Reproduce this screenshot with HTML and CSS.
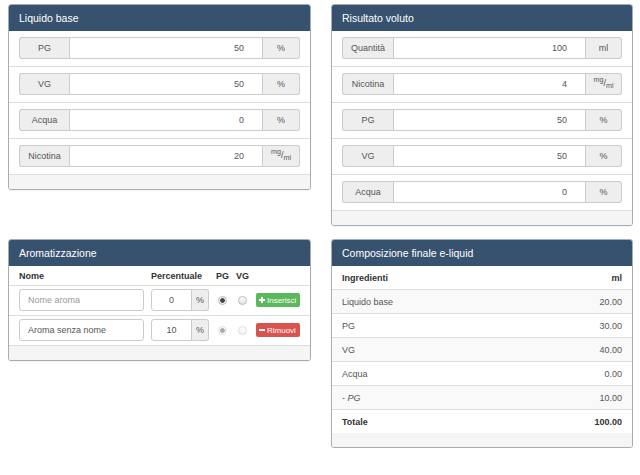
FILE: index.html
```html
<!DOCTYPE html>
<html lang="it">
<head>
  <meta charset="UTF-8">
  <meta name="viewport" content="width=device-width, initial-scale=1.0">
  <title>Calcolatore e-liquid</title>
  <link rel="stylesheet" href="styles.css">
</head>
<body>
  <div class="page">

    <div class="panel base">
      <div class="panel-heading">Liquido base</div>
      <div class="field">
        <div class="input-group">
          <span class="addon label">PG</span>
          <input type="text" id="basePg" value="50">
          <span class="addon unit">%</span>
        </div>
      </div>
      <div class="field">
        <div class="input-group">
          <span class="addon label">VG</span>
          <input type="text" id="baseVg" value="50">
          <span class="addon unit">%</span>
        </div>
      </div>
      <div class="field">
        <div class="input-group">
          <span class="addon label">Acqua</span>
          <input type="text" id="baseWater" value="0">
          <span class="addon unit">%</span>
        </div>
      </div>
      <div class="field">
        <div class="input-group">
          <span class="addon label">Nicotina</span>
          <input type="text" id="baseNic" value="20">
          <span class="addon unit"><span class="frac"><sup>mg</sup>/<sub>ml</sub></span></span>
        </div>
      </div>
      <div class="panel-footer"></div>
    </div>

    <div class="panel target">
      <div class="panel-heading">Risultato voluto</div>
      <div class="field">
        <div class="input-group">
          <span class="addon label">Quantità</span>
          <input type="text" id="amount" value="100">
          <span class="addon unit">ml</span>
        </div>
      </div>
      <div class="field">
        <div class="input-group">
          <span class="addon label">Nicotina</span>
          <input type="text" id="targetNic" value="4">
          <span class="addon unit"><span class="frac"><sup>mg</sup>/<sub>ml</sub></span></span>
        </div>
      </div>
      <div class="field">
        <div class="input-group">
          <span class="addon label">PG</span>
          <input type="text" id="targetPg" value="50">
          <span class="addon unit">%</span>
        </div>
      </div>
      <div class="field">
        <div class="input-group">
          <span class="addon label">VG</span>
          <input type="text" id="targetVg" value="50">
          <span class="addon unit">%</span>
        </div>
      </div>
      <div class="field">
        <div class="input-group">
          <span class="addon label">Acqua</span>
          <input type="text" id="targetWater" value="0">
          <span class="addon unit">%</span>
        </div>
      </div>
      <div class="panel-footer"></div>
    </div>

    <div class="panel">
      <div class="panel-heading">Aromatizzazione</div>
      <div class="aroma-row aroma-head">
        <span>Nome</span>
        <span>Percentuale</span>
        <span>PG</span>
        <span>VG</span>
        <span></span>
      </div>
      <div class="aroma-row">
        <input type="text" class="name" placeholder="Nome aroma">
        <div class="input-group">
          <input type="text" class="perc" value="0">
          <span class="addon pct">%</span>
        </div>
        <input type="radio" class="radio" name="base0" checked>
        <input type="radio" class="radio" name="base0">
        <button class="btn btn-add">
          <svg width="6" height="6" viewBox="0 0 6 6"><path d="M2 0h2v2h2v2H4v2H2V4H0V2h2z" fill="#fff"/></svg>
          Inserisci
        </button>
      </div>
      <div class="aroma-row">
        <input type="text" class="name" value="Aroma senza nome">
        <div class="input-group">
          <input type="text" class="perc" value="10">
          <span class="addon pct">%</span>
        </div>
        <input type="radio" class="radio" name="base1" checked disabled>
        <input type="radio" class="radio" name="base1" disabled>
        <button class="btn btn-remove">
          <svg width="6" height="6" viewBox="0 0 6 6"><rect y="2" width="6" height="2" fill="#fff"/></svg>
          Rimuovi
        </button>
      </div>
      <div class="panel-footer"></div>
    </div>

    <div class="panel">
      <div class="panel-heading">Composizione finale e-liquid</div>
      <table class="table">
        <thead>
          <tr><th>Ingredienti</th><th class="num">ml</th></tr>
        </thead>
        <tbody>
          <tr><td>Liquido base</td><td class="num">20.00</td></tr>
          <tr><td>PG</td><td class="num">30.00</td></tr>
          <tr><td>VG</td><td class="num">40.00</td></tr>
          <tr><td>Acqua</td><td class="num">0.00</td></tr>
          <tr><td>- <em>PG</em></td><td class="num">10.00</td></tr>
          <tr class="total"><td>Totale</td><td class="num">100.00</td></tr>
        </tbody>
      </table>
      <div class="panel-footer"></div>
    </div>

  </div>
</body>
</html>
```

FILE: styles.css
```css
body {
  margin: 0;
  font-family: "Liberation Sans", Arial, sans-serif;
  font-size: 9px;
  color: #333;
  background: #fff;
}
.page {
  display: grid;
  grid-template-columns: 303px 302px;
  column-gap: 20px;
  row-gap: 13px;
  padding: 4px 0 0 8px;
  align-items: start;
}
.panel {
  background: #fff;
  border: 1px solid #a3adb8;
  border-radius: 3px;
  overflow: hidden;
  box-shadow: 0 1px 1px rgba(0,0,0,0.05);
}
.panel-heading {
  height: 26px;
  line-height: 26px;
  padding: 0 10px;
  background: #36526f;
  color: #fff;
  font-size: 10.5px;
}
.panel-footer {
  height: 14px;
  background: #f5f5f5;
}

/* input groups */
.field {
  padding: 6px 10px 7px;
  border-bottom: 1px solid #ddd;
}
.input-group {
  display: flex;
  height: 22px;
}
.input-group input {
  flex: 1;
  min-width: 0;
  margin: 0;
  padding: 0 18px 0 6px;
  border: 1px solid #ccc;
  background: #fff;
  font: inherit;
  color: #555;
  text-align: right;
  box-sizing: border-box;
  outline: none;
}
.addon {
  display: flex;
  align-items: center;
  justify-content: center;
  background: #eee;
  border: 1px solid #ccc;
  color: #555;
  box-sizing: border-box;
}
.addon.label {
  width: 50px;
  border-right: 0;
  border-radius: 3px 0 0 3px;
}
.addon.unit {
  width: 37px;
  border-left: 0;
  border-radius: 0 3px 3px 0;
}
.target .addon.label {
  width: 51px;
}
.target .addon.unit {
  width: 36px;
}
.frac {
  display: block;
  line-height: 9px;
  margin-top: -1px;
}
.frac sup, .frac sub {
  position: relative;
  font-size: 7.2px;
  line-height: 0;
  vertical-align: baseline;
}
.frac sup {
  top: -4px;
}
.frac sub {
  top: 2px;
}

/* flavours */
.aroma-row {
  display: grid;
  grid-template-columns: 125px 58px 13px 13px auto;
  column-gap: 7px;
  align-items: center;
  padding: 3px 10px 4px;
  border-bottom: 1px solid #ddd;
}
.aroma-head {
  height: 19px;
  padding: 0 10px;
  font-weight: bold;
}
.aroma-row .name {
  height: 22px;
  margin: 0;
  padding: 0 8px;
  border: 1px solid #ccc;
  border-radius: 3px;
  font: inherit;
  color: #555;
  box-sizing: border-box;
  outline: none;
}
.name::placeholder {
  color: #999;
}
.aroma-row .perc {
  padding: 0 4px;
  text-align: center;
  border-radius: 3px 0 0 3px;
}
.addon.pct {
  width: 17px;
  border-left: 0;
  border-radius: 0 3px 3px 0;
}
.radio {
  appearance: none;
  justify-self: center;
  width: 9px;
  height: 9px;
  margin: 0;
  border: 1px solid #b8b8b8;
  border-radius: 50%;
  background: linear-gradient(#fff, #e2e2e2);
}
.radio:checked {
  background: radial-gradient(circle, #444 0 2px, #f2f2f2 2.6px);
}
.radio:disabled {
  opacity: 0.45;
}
.btn {
  display: inline-flex;
  align-items: center;
  gap: 2px;
  height: 14px;
  padding: 0 3px;
  border: 0;
  border-radius: 2px;
  color: #fff;
  font-family: inherit;
  font-size: 8px;
  cursor: pointer;
}
.btn-add {
  background: #5cb85c;
}
.btn-remove {
  background: #d9534f;
}

/* result table */
.table {
  width: 100%;
  border-collapse: collapse;
}
.table th, .table td {
  height: 23px;
  padding: 0 10px;
  text-align: left;
  color: #555;
}
.table th {
  color: #333;
}
.table td {
  border-top: 1px solid #ddd;
}
.table .num {
  text-align: right;
}
.table tbody tr:nth-child(odd) {
  background: #f9f9f9;
}
.table .total td {
  font-weight: bold;
  color: #333;
}
```
